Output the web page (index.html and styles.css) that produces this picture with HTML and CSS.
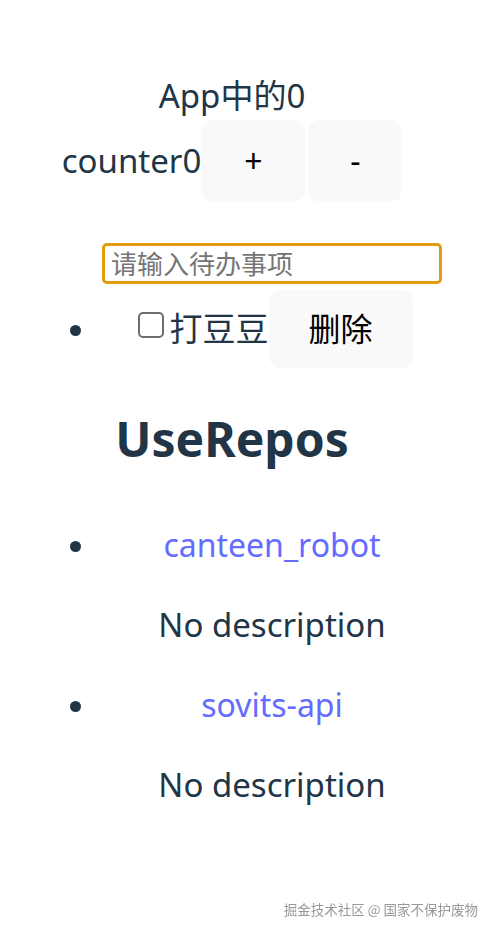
FILE: index.html
```html
<!DOCTYPE html>
<html lang="zh-CN">
<head>
<meta charset="utf-8">
<title>App</title>
<link rel="stylesheet" href="styles.css">
</head>
<body>
<div class="app">
  <div class="title">App中的0</div>
  <div class="counter-row">
    <span class="counter-label">counter0</span><button class="btn counter-btn plus">+</button><button class="btn counter-btn minus">-</button>
  </div>
  <div class="todo-input-wrap">
    <input class="todo-input" type="text" placeholder="请输入待办事项">
  </div>
  <ul class="todo-list">
    <li class="todo-item"><input class="todo-check" type="checkbox"><span class="todo-text">打豆豆</span><button class="btn delete-btn">删除</button></li>
  </ul>
  <h2 class="repos-title">UseRepos</h2>
  <ul class="repo-list">
    <li class="repo-item">
      <a class="repo-link" href="#">canteen_robot</a>
      <p class="repo-desc">No description</p>
    </li>
    <li class="repo-item">
      <a class="repo-link" href="#">sovits-api</a>
      <p class="repo-desc">No description</p>
    </li>
  </ul>
</div>
<div class="watermark">掘金技术社区 @ 国家不保护废物</div>
</body>
</html>
```

FILE: styles.css
```css
html, body {
  margin: 0;
  padding: 0;
  background: #ffffff;
}

body {
  font-family: "Noto Sans", "Noto Sans CJK SC", sans-serif;
  font-size: 32px;
  line-height: 48px;
  color: #213547;
}

.app {
  width: 426px;
  margin-left: 19px;
  padding-top: 72px;
  text-align: center;
}

.title {
  height: 48px;
  font-size: 33px;
}

.counter-row {
  display: flex;
  align-items: center;
  justify-content: center;
  height: 82px;
}

.counter-label {
  font-size: 33px;
}

.btn {
  font-family: "Noto Sans", "Noto Sans CJK SC", sans-serif;
  font-size: 32px;
  line-height: 48px;
  color: #000000;
  background: #f9f9f9;
  border: 1px solid transparent;
  border-radius: 12px;
  padding: 0;
  box-sizing: border-box;
  cursor: pointer;
}

.counter-btn {
  height: 82px;
}

.plus {
  width: 104px;
}

.minus {
  width: 94px;
  margin-left: 3px;
}

.todo-input-wrap {
  margin-top: 41px;
  padding-left: 80px;
  height: 41px;
}

.todo-input {
  display: block;
  margin: 0 auto;
  width: 340px;
  height: 41px;
  box-sizing: border-box;
  border: 3px solid #e39b0f;
  border-radius: 5px;
  padding: 0 6px;
  font-family: "Noto Sans", "Noto Sans CJK SC", sans-serif;
  font-size: 26px;
  color: #213547;
  outline: none;
  background: #fff;
}

.todo-input::placeholder {
  color: #757575;
}

.todo-list {
  margin: 6px 0 0;
  padding-left: 80px;
}

.todo-item {
  text-align: center;
}

.todo-check {
  -webkit-appearance: none;
  appearance: none;
  display: inline-block;
  width: 26px;
  height: 26px;
  box-sizing: border-box;
  border: 2px solid #6e6e6e;
  border-radius: 5px;
  margin: 3px 6px 3px 6px;
  background: #fff;
  vertical-align: baseline;
}

.todo-text {
  font-size: 33px;
}

.delete-btn {
  width: 144px;
  height: 78px;
  vertical-align: baseline;
}

.repos-title {
  margin: 44px 0 0;
  font-size: 48px;
  line-height: 54px;
  font-weight: 700;
  color: #213547;
}

.repo-list {
  margin: 55px 0 0;
  padding-left: 80px;
}

.repo-link {
  display: block;
  color: #646cff;
  text-decoration: none;
}

.repo-desc {
  margin: 32px 0;
  font-size: 33px;
}

.watermark {
  position: fixed;
  right: 16px;
  bottom: 15px;
  font-family: "Noto Sans CJK SC", sans-serif;
  font-size: 13.5px;
  line-height: 16px;
  color: #999999;
  text-shadow: 0 0 1px rgba(255,255,255,0.9);
}
```
